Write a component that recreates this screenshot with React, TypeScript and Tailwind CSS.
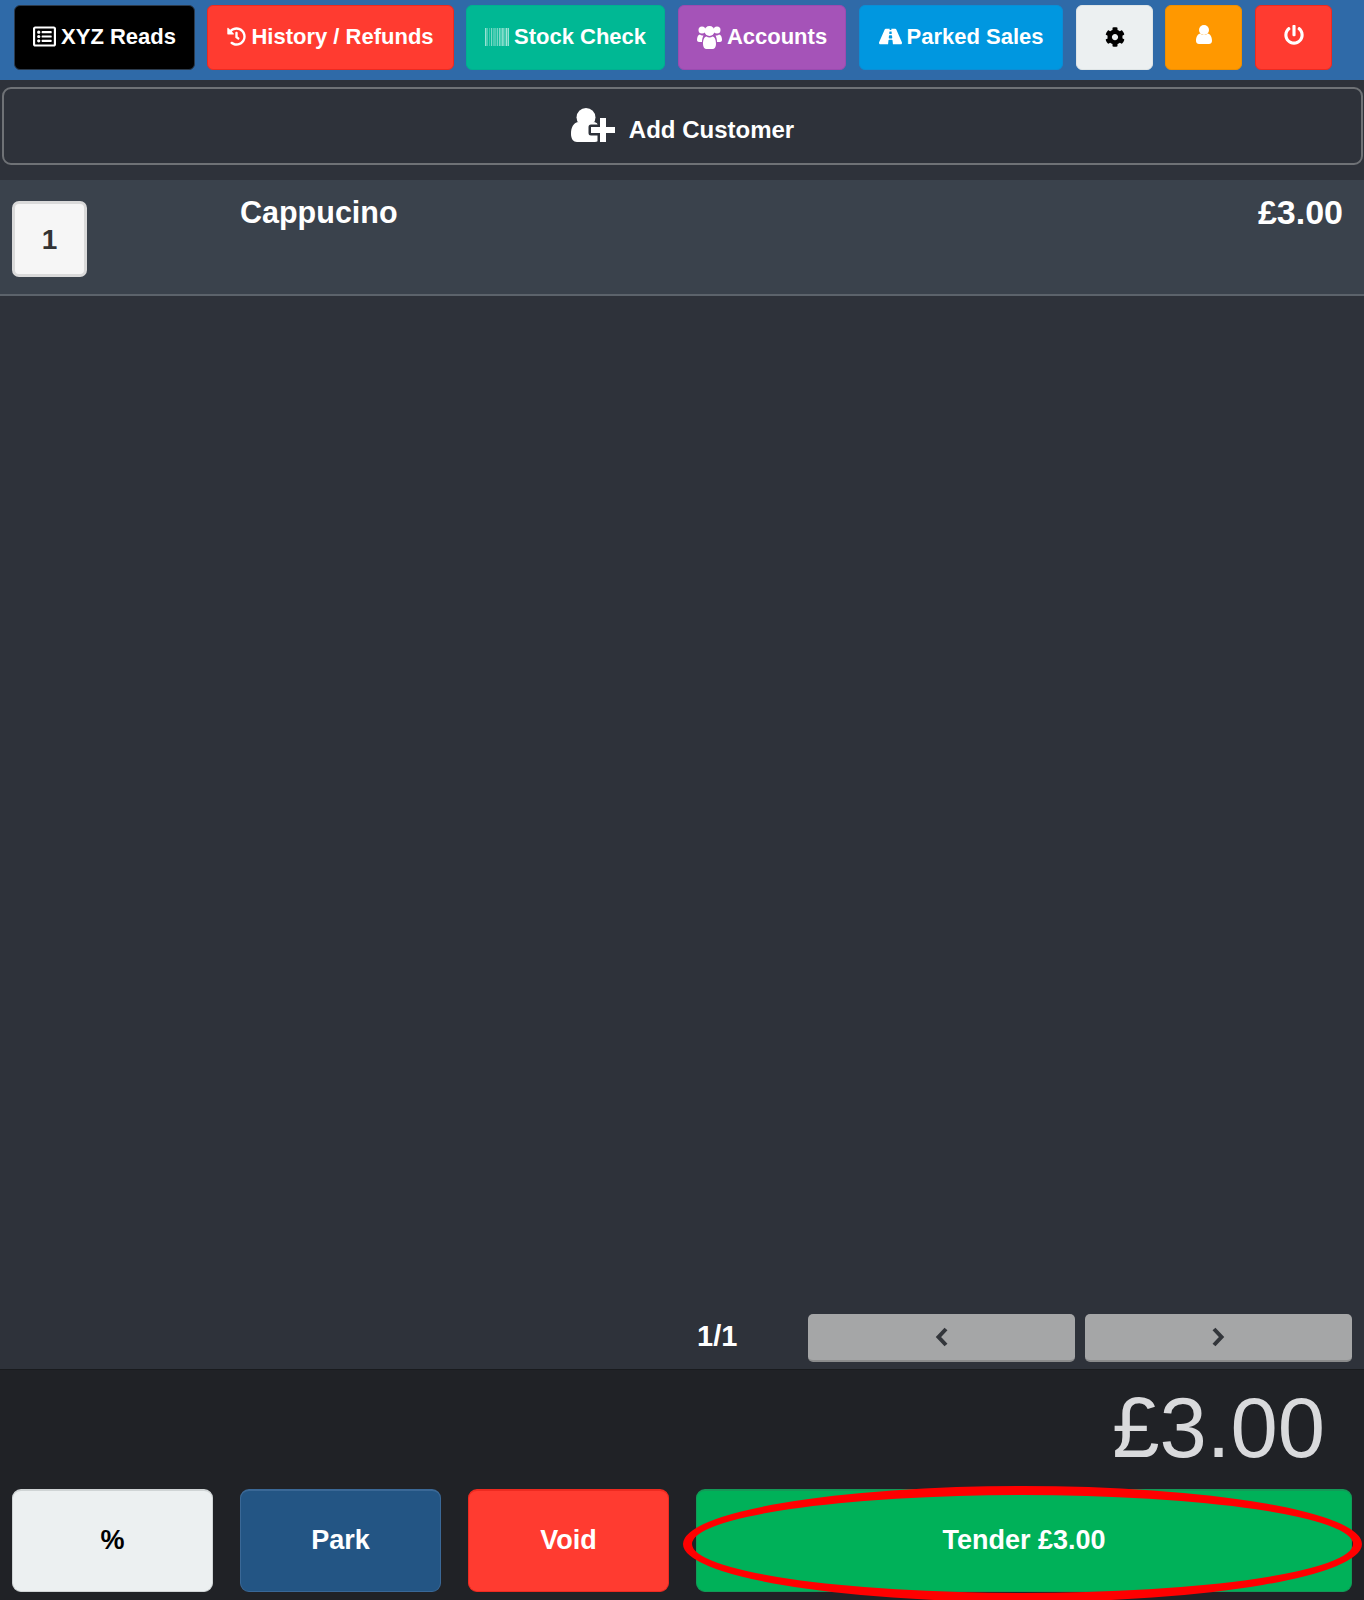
import type { ReactNode } from "react";
import { FaBarcode, FaCog, FaHistory, FaPowerOff, FaRegListAlt, FaRoad } from "react-icons/fa";

const topBtn =
  "h-[65px] shrink-0 inline-flex items-center justify-center gap-[5px] rounded-[6px] border pb-[2px] text-[22px] font-bold";
const bottomBtn =
  "h-[103px] inline-flex items-center justify-center rounded-[9px] border border-t-2 pb-[1px] text-[27px] font-bold";
const pageBtn =
  "flex h-[48px] w-[267px] items-center justify-center rounded-[5px] border-b-2 border-[#8a8b8c] bg-[#a5a6a7]";

function TopButton({ className, children }: { className: string; children: ReactNode }) {
  return (
    <button type="button" className={[topBtn, className].join(" ")}>
      {children}
    </button>
  );
}

function UserIcon() {
  return (
    <svg viewBox="0 0 16 19" className="mb-[5px] h-[19px] w-[16px]" fill="currentColor">
      <circle cx="8" cy="5" r="5" />
      <path d="M0 16c0-4 1.500-7 4.500-7.500C5.500 9.500 6.700 10 8 10s2.500-.5 3.500-1.500C14.500 9 16 12 16 16c0 2-1.500 3-3 3H3c-1.500 0-3-1-3-3z" />
    </svg>
  );
}

function UsersIcon() {
  return (
    <svg viewBox="0 0 25 24" className="h-[24px] w-[25px]" fill="currentColor">
      <circle cx="5" cy="5" r="3.500" />
      <circle cx="20" cy="5" r="3.500" />
      <circle cx="12.500" cy="6" r="5" />
      <path d="M0 15c0-3 1-5.500 3-5.500.8.7 2 1.200 3.500 1-.8 1.500-1.500 3.500-1.500 6.500H2c-1 0-2-.8-2-2z" />
      <path d="M25 15c0-3-1-5.500-3-5.500-.8.7-2 1.200-3.500 1 .8 1.500 1.500 3.500 1.500 6.500h3c1 0 2-.8 2-2z" />
      <path d="M6 19c0-4 1-7 3.500-7.500 1.700 1.300 4.300 1.300 6 0C18 12 19 15 19 19c0 3-1.500 5-3.500 5h-6C7.500 24 6 22 6 19z" />
    </svg>
  );
}

function UserPlusIcon() {
  return (
    <svg viewBox="0 0 44 34" className="h-[34px] w-[44px]" fill="#ffffff">
      <circle cx="15" cy="9.500" r="9.500" />
      <path d="M0 26c0-7 2.500-11 7-12 2 2.300 4.800 3.500 8 3.500s6-1.200 8-3.500c4.500 1 7 5 7 12 0 5-2.500 8-6 8H6c-3.500 0-6-3-6-8z" />
      <path
        d="M29 10h6v9h9v6h-9v9h-6v-9h-9v-6h9z"
        stroke="#2e323a"
        strokeWidth="5"
        strokeLinejoin="round"
        paintOrder="stroke"
      />
    </svg>
  );
}

function Chevron({ points }: { points: string }) {
  return (
    <svg viewBox="0 0 13 20" className="h-[20px] w-[13px]" fill="none" stroke="#33363b" strokeWidth="4">
      <polyline points={points} />
    </svg>
  );
}

export default function App() {
  return (
    <div className="flex h-[1600px] w-[1364px] flex-col overflow-hidden bg-[#2e323a] font-['Liberation_Sans',Arial,sans-serif] text-white">
      <header className="flex h-[80px] shrink-0 items-start bg-[#2f6aa8] pl-[14px] pt-[5px]">
        <TopButton className="w-[181px] border-[#2b3a4c] bg-black text-white">
          <FaRegListAlt className="text-[23px]" />
          XYZ Reads
        </TopButton>
        <TopButton className="ml-[12px] w-[247px] border-[#ee2a20] bg-[#ff3b30] text-white">
          <FaHistory className="text-[19px]" />
          History / Refunds
        </TopButton>
        <TopButton className="ml-[12px] w-[199px] border-[#00b090] bg-[#00b894] text-white">
          <FaBarcode className="text-[24px] opacity-70" />
          Stock Check
        </TopButton>
        <TopButton className="ml-[13px] w-[168px] border-[#9a4bb0] bg-[#a553b8] text-white">
          <UsersIcon />
          Accounts
        </TopButton>
        <TopButton className="ml-[13px] w-[204px] border-[#0a8ed6] bg-[#0097e0] text-white">
          <FaRoad className="text-[23px]" />
          Parked Sales
        </TopButton>
        <TopButton className="ml-[13px] w-[77px] border-[#dfe5e6] bg-[#ecf0f1] text-black">
          <FaCog className="text-[20px]" />
        </TopButton>
        <TopButton className="ml-[12px] w-[77px] border-[#ef8f00] bg-[#ff9800] text-white">
          <UserIcon />
        </TopButton>
        <TopButton className="ml-[13px] w-[77px] border-[#ee2a20] bg-[#ff3b30] text-white">
          <FaPowerOff className="mb-[4px] text-[20px]" />
        </TopButton>
      </header>

      <div className="px-[2px] pt-[7px]">
        <button
          type="button"
          className="flex h-[78px] w-[1361px] items-center justify-center gap-[14px] rounded-[9px] border-2 border-[#6f7276] text-[24px] font-bold"
        >
          <span className="mb-[3px]">
            <UserPlusIcon />
          </span>
          <span className="mt-[8px]">Add Customer</span>
        </button>
      </div>

      <div className="mt-[15px] flex h-[116px] shrink-0 items-start border-b-2 border-[#5c636b] bg-[#3a424c]">
        <div className="ml-[12px] mt-[21px] flex h-[76px] w-[75px] items-center justify-center rounded-[7px] border-[3px] border-[#dadada] bg-[#f6f6f6] pt-[2px] text-[28px] font-bold text-[#333333]">
          1
        </div>
        <div className="ml-[153px] mt-[10px] text-[30.5px] font-bold">Cappucino</div>
        <div className="ml-auto mr-[21px] mt-[7px] text-[34px] font-bold">£3.00</div>
      </div>

      <div className="flex-1" />

      <div className="flex h-[55px] shrink-0 items-start">
        <div className="ml-[697px] text-[29px] leading-[44px] font-bold">1/1</div>
        <button type="button" className={["ml-[71px]", pageBtn].join(" ")}>
          <Chevron points="11,2 3.500,10 11,18" />
        </button>
        <button type="button" className={["ml-[10px]", pageBtn].join(" ")}>
          <Chevron points="2,2 9.500,10 2,18" />
        </button>
      </div>

      <div className="h-[231px] shrink-0 border-t border-[#191b1e] bg-[#202226]">
        <div className="h-[119px] pr-[39px] pt-[9px] text-right text-[85px] leading-[98px] text-[#d9dadc]">
          £3.00
        </div>
        <div className="flex pl-[12px]">
          <button type="button" className={[bottomBtn, "w-[201px] border-[#cfd4d5] bg-[#ecf0f1] text-black"].join(" ")}>
            %
          </button>
          <button type="button" className={[bottomBtn, "ml-[27px] w-[201px] border-[#3a6896] bg-[#235584] text-white"].join(" ")}>
            Park
          </button>
          <button type="button" className={[bottomBtn, "ml-[27px] w-[201px] border-[#ee2a20] bg-[#ff3b30] text-white"].join(" ")}>
            Void
          </button>
          <div className="relative ml-[27px]">
            <button type="button" className={[bottomBtn, "w-[656px] border-[#129a57] bg-[#00b159] text-white"].join(" ")}>
              Tender £3.00
            </button>
            <div className="pointer-events-none absolute left-[-13px] top-[-3px] h-[116px] w-[679px] rounded-[50%] border-[9px] border-[#ff0000]" />
          </div>
        </div>
      </div>
    </div>
  );
}
